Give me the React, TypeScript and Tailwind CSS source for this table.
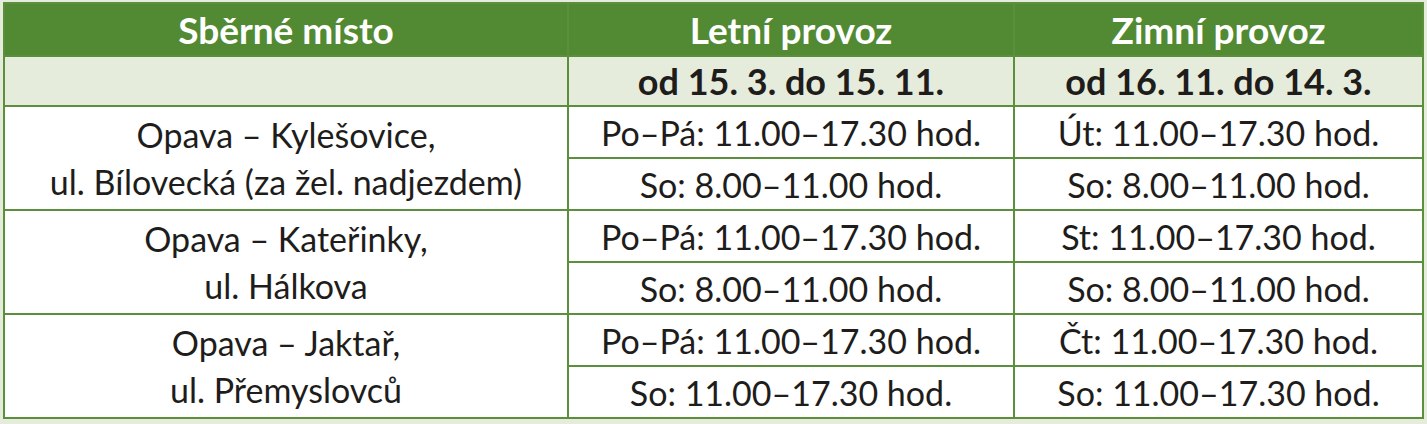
const PLACES = [
  {
    name: ["Opava – Kylešovice,", "ul. Bílovecká (za žel. nadjezdem)"],
    summer: ["Po–Pá: 11.00–17.30 hod.", "So: 8.00–11.00 hod."],
    winter: ["Út: 11.00–17.30 hod.", "So: 8.00–11.00 hod."],
  },
  {
    name: ["Opava – Kateřinky,", "ul. Hálkova"],
    summer: ["Po–Pá: 11.00–17.30 hod.", "So: 8.00–11.00 hod."],
    winter: ["St: 11.00–17.30 hod.", "So: 8.00–11.00 hod."],
  },
  {
    name: ["Opava – Jaktař,", "ul. Přemyslovců"],
    summer: ["Po–Pá: 11.00–17.30 hod.", "So: 11.00–17.30 hod."],
    winter: ["Čt: 11.00–17.30 hod.", "So: 11.00–17.30 hod."],
  },
]

const cell = "border-2 border-[#5b8f3b] text-center align-middle p-0 whitespace-nowrap"

export default function App() {
  return (
    <div className="min-h-screen w-full bg-[#e6ecdc] pt-[2px] pl-[3px] pr-[6px] font-['Lato','Open_Sans',sans-serif] text-[#1e1d1b]">
      <table className="w-[1419px] table-fixed border-collapse bg-white">
        <colgroup>
          <col className="w-[564px]" />
          <col className="w-[446px]" />
          <col className="w-[409px]" />
        </colgroup>
        <thead>
          <tr className="h-[53px] bg-[#528a33] text-white text-[37px] leading-[40px] font-bold">
            <th className={cell}>Sběrné místo</th>
            <th className={cell}>Letní provoz</th>
            <th className={cell}>Zimní provoz</th>
          </tr>
          <tr className="h-[50px] bg-[#e6ecdc] text-[36px] leading-[40px] font-bold">
            <th className={cell}></th>
            <th className={cell}>od 15. 3. do 15. 11.</th>
            <th className={cell}>od 16. 11. do 14. 3.</th>
          </tr>
        </thead>
        <tbody className="text-[34px] leading-[47px]">
          {PLACES.map((p) => (
            <>
              <tr key={p.name[0]} className="h-[52px]">
                <td rowSpan={2} className={cell}>
                  {p.name[0]}
                  <br />
                  {p.name[1]}
                </td>
                <td className={cell}>{p.summer[0]}</td>
                <td className={cell}>{p.winter[0]}</td>
              </tr>
              <tr key={p.name[1]} className="h-[52px]">
                <td className={cell}>{p.summer[1]}</td>
                <td className={cell}>{p.winter[1]}</td>
              </tr>
            </>
          ))}
        </tbody>
      </table>
    </div>
  )
}
